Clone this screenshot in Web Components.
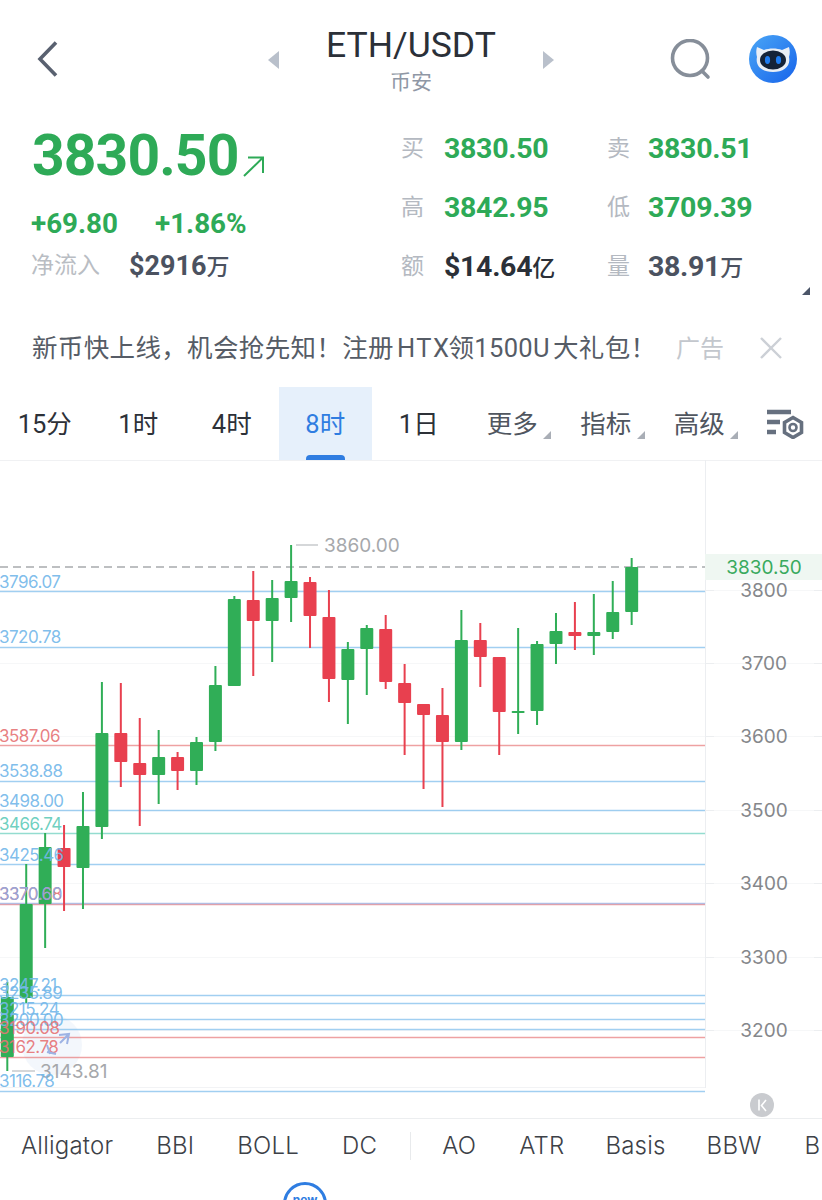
<!DOCTYPE html>
<html lang="zh">
<head>
<meta charset="utf-8">
<title>ETH/USDT</title>
<style>
	html, body { margin: 0; padding: 0; background: #fff; }
	body {
		width: 822px;
		height: 1200px;
		overflow: hidden;
		font-family: Roboto, "Noto Sans CJK SC", sans-serif;
	}
</style>
</head>
<body>
<app-header symbol="ETH/USDT" exchange="币安"></app-header>
<price-panel></price-panel>
<ad-banner>新币快上线，机会抢先知！注册<span style="margin:0 -2px 0 3px;letter-spacing:1.5px">HTX</span>领<span style="margin-right:3px">1500U</span>大礼包！</ad-banner>
<period-tabs></period-tabs>
<kline-chart></kline-chart>
<indicator-tabs></indicator-tabs>

<script>
'use strict';

function shadow(el, html) {
	el.attachShadow({ mode: 'open' }).innerHTML = html;
}

class AppHeader extends HTMLElement {
	constructor() {
		super();
		shadow(this, `
		<style>
			:host { display: block; height: 108px; }
			.bar { display: grid; grid-template-columns: 258px 1fr 258px; height: 100%; }
			.left { padding: 40px 0 0 36px; }
			.mid { display: flex; justify-content: center; gap: 46px; padding-top: 24px; }
			.name { text-align: center; }
			.title { font-size: 35.500px; line-height: 42px; color: #2b3038; }
			.sub { font-size: 21px; line-height: 28px; margin-top: 2px; color: #8f97a5; }
			.arrow { margin-top: 27px; }
			.right { display: flex; align-items: flex-start; justify-content: flex-end; gap: 36px; padding: 35px 25px 0 0; }
			.search { margin-top: 4px; }
			svg { display: block; }
		</style>
		<div class="bar">
			<div class="left">
				<svg width="24" height="38" viewBox="0 0 24 38"><path d="M20 2.5 4 19l16 16.500" fill="none" stroke="#596170" stroke-width="3.600"/></svg>
			</div>
			<div class="mid">
				<svg class="arrow" width="12" height="18" viewBox="0 0 12 18"><path d="M11 0v18L0 9z" fill="#b9c0cb"/></svg>
				<div class="name">
					<div class="title"></div>
					<div class="sub"></div>
				</div>
				<svg class="arrow" width="12" height="18" viewBox="0 0 12 18"><path d="M1 0v18l11-9z" fill="#b9c0cb"/></svg>
			</div>
			<div class="right">
				<svg class="search" width="44" height="42" viewBox="0 0 44 42">
					<circle cx="21" cy="19" r="17.500" fill="none" stroke="#868e99" stroke-width="3.600"/>
					<path d="M33 32l6 6" stroke="#868e99" stroke-width="3.600" stroke-linecap="round"/>
				</svg>
				<svg width="48" height="48" viewBox="0 0 48 48">
					<defs><linearGradient id="g" x1="0" y1="0" x2="1" y2="1"><stop offset="0" stop-color="#4aa6f6"/><stop offset="1" stop-color="#1763ea"/></linearGradient></defs>
					<circle cx="24" cy="24" r="24" fill="url(#g)"/>
					<path d="M8 12l7 3c5-2 13-2 18 0l7-3c1 3 1 7 0 10 2 9-5 15-16 15S6 31 8 22c-1-3-1-7 0-10z" fill="#e9eef5"/>
					<ellipse cx="24" cy="25" rx="13" ry="9.500" fill="#152338"/>
					<ellipse cx="18.500" cy="25" rx="2.600" ry="4" fill="#1f7cf0"/>
					<ellipse cx="29.500" cy="25" rx="2.600" ry="4" fill="#1f7cf0"/>
				</svg>
			</div>
		</div>`);
	}
	connectedCallback() {
		this.shadowRoot.querySelector('.title').textContent = this.getAttribute('symbol');
		this.shadowRoot.querySelector('.sub').textContent = this.getAttribute('exchange');
	}
}
customElements.define('app-header', AppHeader);

class QuoteCell extends HTMLElement {
	constructor() {
		super();
		shadow(this, `
		<style>
			:host { display: flex; align-items: center; height: 59px; }
			.k { width: var(--k, 43px); margin-left: var(--m, 0); font-size: 23px; line-height: 32px; color: #b4b9c1; }
			.v { font-size: 28.500px; line-height: 32px; letter-spacing: -.3px; font-weight: 700; color: var(--c, #2eaa57); white-space: nowrap; }
		</style>
		<span class="k"></span><span class="v"><slot></slot></span>`);
	}
	connectedCallback() {
		this.shadowRoot.querySelector('.k').textContent = this.getAttribute('label');
	}
}
customElements.define('quote-cell', QuoteCell);

class PricePanel extends HTMLElement {
	constructor() {
		super();
		shadow(this, `
		<style>
			:host { display: block; height: 197px; position: relative; }
			.wrap { display: grid; grid-template-columns: 370px 1fr; height: 100%; padding-left: 31px; box-sizing: border-box; }
			.price { display: flex; align-items: flex-end; font-size: 57px; letter-spacing: -.9px; font-weight: 700; line-height: 66px; color: #2eaa57; margin: 15px 0 0 1px; }
			.price svg { margin: 0 0 11px 4px; display: block; }
			.chg { display: flex; gap: 37px; font-size: 27.800px; font-weight: 700; color: #2eaa57; margin-top: 19px; line-height: 32px; }
			.flow { display: flex; align-items: center; margin-top: 10px; line-height: 32px; }
			.flow .k { width: 98px; font-size: 23px; color: #b9bdc3; }
			.flow .v { font-size: 27px; font-weight: 700; color: #4b5260; }
			.flow small { font-size: 23px; font-weight: 500; line-height: 0; }
			.grid { display: grid; grid-template-columns: 204px 1fr; margin-top: 11px; align-content: start; }
			.b { --m: 2px; --k: 41px; }
			.corner { position: absolute; right: 12px; bottom: 10px; width: 0; height: 0; border-left: 8px solid transparent; border-bottom: 8px solid #4b5568; }
		</style>
		<div class="wrap">
			<div>
				<div class="price">3830.50<svg width="23" height="23" viewBox="0 0 23 23"><path d="M2 21 20.500 3M6 2.500h15V18" fill="none" stroke="#2eaa57" stroke-width="2"/></svg></div>
				<div class="chg"><span>+69.80</span><span>+1.86%</span></div>
				<div class="flow"><span class="k">净流入</span><span class="v">$2916<small>万</small></span></div>
			</div>
			<div class="grid">
				<quote-cell label="买">3830.50</quote-cell>
				<quote-cell label="卖" class="b">3830.51</quote-cell>
				<quote-cell label="高">3842.95</quote-cell>
				<quote-cell label="低" class="b">3709.39</quote-cell>
				<quote-cell label="额" style="--c:#2b3038">$14.64<small style="font-size:23px;font-weight:500;line-height:0">亿</small></quote-cell>
				<quote-cell label="量" class="b" style="--c:#4b5260">38.91<small style="font-size:23px;font-weight:500;line-height:0">万</small></quote-cell>
			</div>
		</div>
		<div class="corner"></div>`);
	}
}
customElements.define('price-panel', PricePanel);

class AdBanner extends HTMLElement {
	constructor() {
		super();
		shadow(this, `
		<style>
			:host { display: block; height: 82px; }
			.row { display: flex; align-items: center; height: 100%; padding-left: 32px; }
			.txt { font-size: 25.500px; letter-spacing: .35px; color: #565c66; width: 644px; white-space: nowrap; margin-top: -2px; }
			.tag { font-size: 24px; color: #c3c7cd; width: 83px; }
			svg { display: block; margin-top: 3px; }
		</style>
		<div class="row">
			<span class="txt"><slot></slot></span>
			<span class="tag">广告</span>
			<svg width="24" height="24" viewBox="0 0 24 24"><path d="M2 2l20 20M22 2 2 22" stroke="#ccd0d6" stroke-width="2.400"/></svg>
		</div>`);
	}
}
customElements.define('ad-banner', AdBanner);

class PeriodTabs extends HTMLElement {
	constructor() {
		super();
		let items = [['15分'], ['1时'], ['4时'], ['8时', 'on'], ['1日'], ['更多', 'more'], ['指标', 'more'], ['高级', 'more']];
		let cells = items.map(([t, m]) => `<div class="tab ${m || ''}">${t}</div>`).join('');
		shadow(this, `
		<style>
			:host { display: block; height: 73px; }
			.row { display: grid; grid-template-columns: repeat(8, 93.500px) 1fr; height: 100%; margin-left: -2px; }
			.tab { display: flex; align-items: center; justify-content: center; position: relative; font-size: 25.500px; color: #2d3138; padding-bottom: 4px; box-sizing: border-box; }
			.tab.on { background: #e6f0fb; color: #2f7de1; }
			.tab.on::after { content: ''; position: absolute; left: 27px; bottom: 0; width: 39px; height: 5px; background: #2f7de1; border-radius: 4px 4px 0 0; }
			.tab.more { color: #50565f; }
			.tab.more::after { content: ''; position: absolute; right: 8px; bottom: 21px; border-left: 8px solid transparent; border-bottom: 8px solid #a9aeb6; }
			.icon { display: flex; align-items: center; padding-left: 20px; }
		</style>
		<div class="row">${cells}
			<div class="icon">
				<svg width="38" height="30" viewBox="0 0 38 30">
					<path d="M1 3h24M1 13h13M1 23h9" stroke="#66707f" stroke-width="4.500"/>
					<path d="M27 8.500l8.500 5v10L27 28.500l-8.500-5v-10z" fill="none" stroke="#66707f" stroke-width="3.600"/>
					<circle cx="27" cy="18.500" r="3.500" fill="none" stroke="#66707f" stroke-width="2.600"/>
				</svg>
			</div>
		</div>`);
	}
}
customElements.define('period-tabs', PeriodTabs);

// [wick top, body top, body bottom, wick bottom, up?] in page pixels
const CANDLES = [
	[982, 997, 1057, 1071, 1], [864, 904, 998, 1003, 1], [833, 847, 904, 948, 1], [825, 848, 867, 911, 0],
	[792, 826, 868, 909, 1], [682, 733, 827, 839, 1], [683, 733, 762, 787, 0], [718, 763, 775, 826, 0],
	[730, 757, 775, 804, 1], [752, 757, 771, 790, 0], [737, 742, 771, 785, 1], [666, 685, 742, 751, 1],
	[596, 599, 686, 686, 1], [571, 600, 621, 676, 0], [580, 598, 621, 662, 1], [545, 581, 598, 622, 1],
	[577, 582, 616, 648, 0], [590, 617, 679, 702, 0], [642, 649, 680, 724, 1], [625, 628, 649, 695, 1],
	[615, 629, 682, 689, 0], [664, 683, 703, 755, 0], [704, 704, 715, 789, 0], [688, 715, 742, 807, 0],
	[610, 640, 742, 750, 1], [623, 640, 657, 687, 0], [657, 657, 712, 755, 0], [628, 711, 713, 734, 1],
	[641, 644, 711, 725, 1], [613, 631, 644, 664, 1], [602, 632, 636, 650, 0], [594, 632, 636, 655, 1],
	[581, 612, 632, 639, 1], [558, 567, 612, 625, 1]
];

const BLUE = '#74b8ea', RED = '#e67476', TEAL = '#62ccba';
// [text, label y, line y, colour]
const LEVELS = [
	['3796.07', 582, 591.500, BLUE], ['3720.78', 637, 647.500, BLUE], ['3587.06', 736, 745.500, RED],
	['3538.88', 771, 781.500, BLUE], ['3498.00', 801, 810.500, BLUE], ['3466.74', 824, 833.500, TEAL],
	['3425.46', 855, 864.500, BLUE], ['3370.68', 894, 904.500, RED], ['3370.60', 894, 903.500, '#8fa8e0'],
	['3247.21', 985, 995.500, BLUE], ['3235.89', 993, 1003.500, BLUE], ['3215.24', 1009, 1019.500, BLUE],
	['3200.00', 1020, 1029.500, BLUE], ['3190.08', 1028, 1037.500, RED], ['3162.78', 1047, 1057.500, RED],
	['3116.78', 1081, 1091.500, BLUE]
];
const AXIS = [[3800, 590], [3700, 663], [3600, 736], [3500, 810], [3400, 883], [3300, 957], [3200, 1030]];

class KlineChart extends HTMLElement {
	constructor() {
		super();
		let grid = AXIS.map(([t, y]) => `
			<path d="M0 ${y}.5H822" stroke="#f6f7f8"/>
			<path d="M705 ${y}.5h9M814 ${y}.5h8" stroke="#eceef0"/>
			<text x="764" y="${y}" class="axis" dominant-baseline="central" text-anchor="middle">${t}</text>`).join('');
		let lines = LEVELS.map(([, , y, c]) => `<path d="M0 ${y}H705" stroke="${c}" stroke-opacity=".68" stroke-width="1.300"/>`).join('');
		let candles = CANDLES.map(([hi, top, bot, lo, up], i) => {
			let x = 7.300 + i * 18.920;
			let c = up ? '#30ae57' : '#e8404f';
			return `<rect x="${x - 1}" y="${hi}" width="2" height="${lo - hi}" fill="${c}"/>
				<rect x="${x - 6.500}" y="${top}" width="13" height="${bot - top}" rx="1" fill="${c}"/>`;
		}).join('');
		let labels = LEVELS.map(([t, y, , c]) => `<text x="-1" y="${y}" class="lvl" dominant-baseline="central" fill="${c}">${t}</text>`).join('');
		shadow(this, `
		<style>
			:host { display: block; height: 658px; }
			svg { display: block; font-family: Inter, "Liberation Sans", sans-serif; }
			.axis { font-size: 19px; fill: #85878b; }
			.lvl { font-size: 17px; letter-spacing: -.5px; fill-opacity: .92; }
			.ext { font-size: 19px; fill: #a6a8ab; }
			.tag { font-size: 19px; fill: #3aaa5e; }
		</style>
		<svg width="822" height="658" viewBox="0 460 822 658">
			<path d="M0 460.500H822" stroke="#f0f1f3"/>
			${grid}
			<path d="M705.500 460V1088" stroke="#eceef1"/>
			<path d="M0 1087.500H705" stroke="#f2f3f5"/>
			<circle cx="52" cy="1045" r="30" fill="#e8effa" fill-opacity=".5"/>
			${lines}
			<path d="M0 567H705" stroke="#a8aaad" stroke-width="1.500" stroke-dasharray="8 5"/>
			${candles}
			<path d="M296 545h22M12 1071h23" stroke="#c8cacd" stroke-width="1.500"/>
			<text x="324" y="545" class="ext" dominant-baseline="central">3860.00</text>
			<text x="40" y="1071" class="ext" dominant-baseline="central">3143.81</text>
			${labels}
			<path d="M59 1035l10 -1-2 10M69 1034l-9 9M50 1054l-3 -9M47 1052l9 2" fill="none" stroke="#9db3e4" stroke-width="2"/>
			<rect x="705" y="554" width="117" height="26" fill="#eff7f2"/>
			<text x="764" y="567" class="tag" dominant-baseline="central" text-anchor="middle">3830.50</text>
			<circle cx="762" cy="1105" r="12" fill="#c9cbcf"/>
			<path d="M759 1099.500v11M766 1100l-4.500 5.500 4.500 5.500" fill="none" stroke="#fff" stroke-width="1.600"/>
		</svg>`);
	}
}
customElements.define('kline-chart', KlineChart);

class IndicatorTabs extends HTMLElement {
	constructor() {
		super();
		let tab = (t) => `<span>${t}</span>`;
		shadow(this, `
		<style>
			:host { display: block; height: 82px; position: relative; overflow: hidden; border-top: 1px solid #eceef0; box-sizing: border-box; }
			.row { display: flex; align-items: center; gap: 43px; height: 53px; padding-left: 21px; font-family: Inter, "Liberation Sans", sans-serif; font-size: 24px; letter-spacing: .2px; font-weight: 300; color: #3d4147; white-space: nowrap; }
			.sep { flex: none; width: 1px; height: 28px; background: #e8eaec; margin-left: -10px; margin-right: -12px; }
			.tight { margin-left: -2px; }
			.fab { position: absolute; left: 283px; top: 63px; width: 44px; height: 44px; box-sizing: border-box; border: 3px solid #2f7de1; border-radius: 50%; background: #fff; color: #2f7de1; font-family: Inter, sans-serif; font-size: 12px; font-weight: 700; text-align: center; line-height: 30px; }
		</style>
		<div class="row">
			${tab('Alligator')}${tab('BBI')}${tab('BOLL')}${tab('DC')}<i class="sep"></i>${tab('AO')}${tab('ATR')}<span class="tight">Basis</span><span class="tight">BBW</span>${tab('B')}
		</div>
		<div class="fab">new</div>`);
	}
}
customElements.define('indicator-tabs', IndicatorTabs);
</script>
</body>
</html>
